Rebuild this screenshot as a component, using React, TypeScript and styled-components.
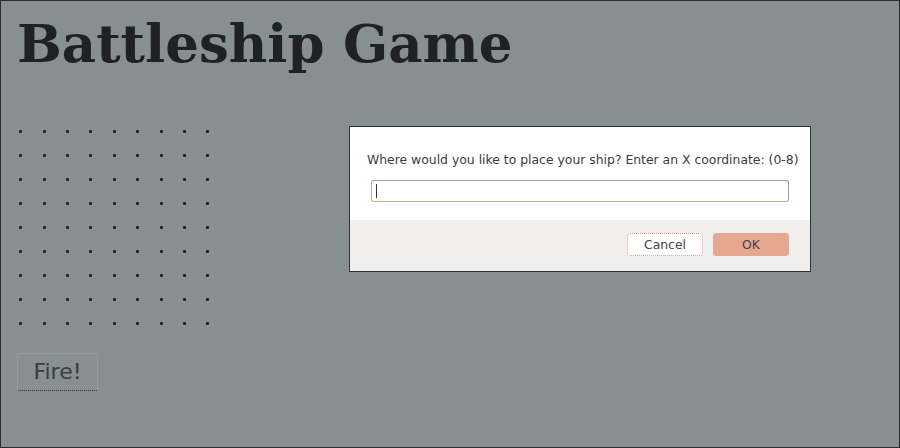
import React from 'react';
import styled, { createGlobalStyle } from 'styled-components';

const GlobalStyle = createGlobalStyle`
  html, body {
    margin: 0;
    padding: 0;
    background: #878f90;
  }
`;

const Page = styled.div`
  position: relative;
  box-sizing: border-box;
  width: 900px;
  height: 448px;
  border: 1px solid #2b2f31;
  background: #878f90;
  padding: 0 0 0 16px;
  overflow: hidden;
`;

const Title = styled.h1`
  margin: 6px 0 0 0;
  font-family: 'DejaVu Serif', serif;
  font-weight: bold;
  font-size: 53px;
  line-height: 72px;
  color: #1f2122;
`;

const Board = styled.div`
  display: grid;
  grid-template-columns: repeat(9, 23.4px);
  grid-auto-rows: 24.1px;
  margin: 40px 0 0 -8px;
  width: fit-content;
`;

const Cell = styled.div`
  display: flex;
  align-items: center;
  justify-content: center;
  &::before {
    content: '';
    width: 3px;
    height: 3px;
    border-radius: 1px;
    background: #1f2223;
  }
`;

const FireButton = styled.button`
  margin-top: 17px;
  width: 81px;
  height: 38px;
  border: 1px solid #929a9b;
  border-bottom: 1px dotted #2e3334;
  border-radius: 3px;
  background: #878f90;
  font-family: 'DejaVu Sans', sans-serif;
  font-size: 22px;
  color: #3a3e40;
  padding: 0 0 1px 0;
`;

const Dialog = styled.div`
  position: absolute;
  left: 348px;
  top: 125px;
  width: 460px;
  border: 1px solid #2d3132;
  background: #ffffff;
  font-family: 'DejaVu Sans', sans-serif;
`;

const Body = styled.div`
  padding: 25px 21px 18px 17px;
  display: flex;
  flex-direction: column;
  gap: 12px;
`;

const Message = styled.div`
  font-size: 12.4px;
  color: #3c3c3c;
  line-height: 16px;
  white-space: nowrap;
`;

const Input = styled.div`
  box-sizing: border-box;
  margin-left: 4px;
  height: 22px;
  border: 1px solid #9aa0a2;
  border-bottom-color: #e0a48c;
  border-left-color: #e0a48c;
  border-radius: 3px;
  padding: 3px 4px;
  &::after {
    content: '';
    display: block;
    width: 1px;
    height: 14px;
    background: #333;
  }
`;

const Footer = styled.div`
  background: #f0efed;
  height: 51px;
  display: flex;
  justify-content: flex-end;
  align-items: flex-start;
  padding: 13px 21px 0 0;
  box-sizing: border-box;
  gap: 10px;
`;

const DialogButton = styled.button<{ $primary?: boolean }>`
  width: 76px;
  height: 23px;
  border-radius: 3px;
  font-family: 'DejaVu Sans', sans-serif;
  font-size: 12.4px;
  color: #444;
  background: ${p => (p.$primary ? '#e6a891' : '#ffffff')};
  border: ${p => (p.$primary ? '1px solid #e6a891' : '1px dotted #e0a08a')};
`;

const App = () => {
  const cells = Array.from({ length: 81 });
  return (
    <>
      <GlobalStyle />
      <Page>
        <Title>Battleship Game</Title>
        <Board>
          {cells.map((_, i) => (
            <Cell key={i} />
          ))}
        </Board>
        <FireButton>Fire!</FireButton>
        <Dialog>
          <Body>
            <Message>Where would you like to place your ship? Enter an X coordinate: (0-8)</Message>
            <Input />
          </Body>
          <Footer>
            <DialogButton>Cancel</DialogButton>
            <DialogButton $primary>OK</DialogButton>
          </Footer>
        </Dialog>
      </Page>
    </>
  );
};

export default App;
